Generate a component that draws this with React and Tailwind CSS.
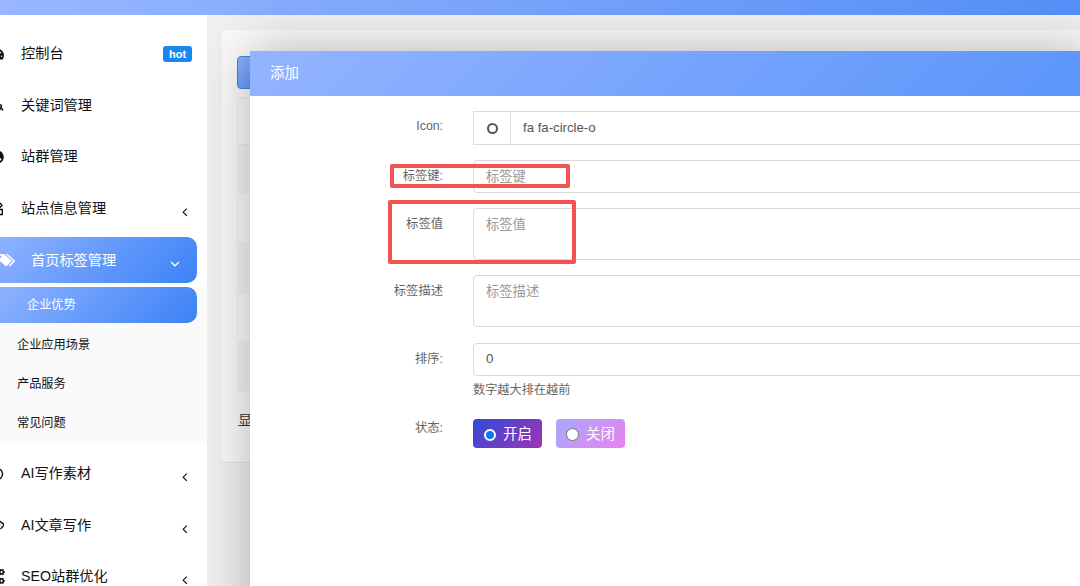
import { FaGlobeAsia, FaTachometerAlt, FaCogs } from "react-icons/fa";

const Chevron = ({ open }) => (
  <svg
    className="mt-[7px] h-[10px] w-[10px]"
    viewBox="0 0 10 10"
    fill="none"
    stroke="currentColor"
    strokeWidth="1.2"
  >
    <path d={open ? "M1 3 L5 6.8 L9 3" : "M6.8 1.6 L3.2 5.2 L6.8 8.8"} />
  </svg>
);

const LineIcon = ({ d }) => (
  <svg
    className="h-[14px] w-[14px]"
    viewBox="0 0 14 14"
    fill="none"
    stroke="currentColor"
    strokeWidth="1.4"
  >
    <path d={d} />
  </svg>
);

const TagsIcon = () => (
  <svg className="h-[14px] w-[16px]" viewBox="0 0 16 14" fill="currentColor">
    <path
      fillRule="evenodd"
      d="M-3 1 H4 L11 7.2 Q11.6 8 11 8.8 L6.8 13 Q6 13.6 5.2 13 L-3 5 Z M0.2 2.6 A1.2 1.2 0 1 0 0.3 2.6 Z"
    />
    <path d="M5.6 1 H7.4 L14.6 7.2 Q15.2 8 14.6 8.8 L10.4 13 Q9.4 13.6 8.6 12.8 L12.6 8.6 Q13 8 12.6 7.4 Z" />
  </svg>
);

const MenuItem = ({ icon, label, badge, arrow }) => (
  <a
    href="#"
    className="flex h-[51.6px] shrink-0 items-center pr-[15px] text-[14.2px] text-[#111]"
  >
    <span className="-ml-[10px] flex w-[31px] text-[14px]">{icon}</span>
    <span className="grow">{label}</span>
    {badge && (
      <span className="mt-[1px] flex h-4 w-[29px] items-center justify-center rounded-[3px] bg-[#1688f1] text-[11px] font-bold text-white">
        {badge}
      </span>
    )}
    {arrow && (
      <span className="mr-[2px]">
        <Chevron />
      </span>
    )}
  </a>
);

const SubItem = ({ label }) => (
  <a
    href="#"
    className="flex h-[39.2px] items-center pl-[17px] text-[12.2px] text-[#111]"
  >
    {label}
  </a>
);

const Sidebar = () => (
  <aside className="relative z-20 mr-[1px] flex w-[207px] shrink-0 flex-col overflow-hidden bg-white pt-[13px]">
    <MenuItem icon={<FaTachometerAlt />} label="控制台" badge="hot" />
    <MenuItem
      icon={<LineIcon d="M8 6 L11.5 7.5 L11 9.5 L13 12.5 M10.5 9 L9.5 12.5" />}
      label="关键词管理"
    />
    <MenuItem icon={<FaGlobeAsia />} label="站群管理" />
    <MenuItem
      icon={
        <LineIcon d="M7 1.5 H10.5 L12 3.5 L9.5 6 M9 7.5 H12.3 V12.5 H2 V3" />
      }
      label="站点信息管理"
      arrow
    />
    <a
      href="#"
      className="mt-[3px] flex h-[46px] w-[197px] shrink-0 items-center rounded-r-[10px] bg-linear-[135deg,#8fb2ff,#3b82f6] text-[14.2px] text-white"
    >
      <TagsIcon />
      <span className="ml-[15px] grow">首页标签管理</span>
      <span className="mr-[17px]">
        <Chevron open />
      </span>
    </a>
    <div className="mt-1 shrink-0 bg-[#fafafa] pb-[1px]">
      <a
        href="#"
        className="mb-[2px] flex h-[36px] w-[197px] items-center rounded-r-[10px] bg-linear-[135deg,#8fb2ff,#3b82f6] pl-[27px] text-[12.2px] text-white"
      >
        企业优势
      </a>
      <SubItem label="企业应用场景" />
      <SubItem label="产品服务" />
      <SubItem label="常见问题" />
    </div>
    <div className="mt-1 flex flex-col">
      <MenuItem
        icon={<LineIcon d="M7 1.5 A5.5 5.5 0 1 1 6.9 1.5" />}
        label="AI写作素材"
        arrow
      />
      <MenuItem
        icon={<LineIcon d="M2 4.5 H9.5 V3 L14 6.5 Q13 9 10.5 11 M9.5 6 V8" />}
        label="AI文章写作"
        arrow
      />
      <MenuItem
        icon={<FaCogs className="-ml-[4px] h-[15px] w-[19px] shrink-0" />}
        label="SEO站群优化"
        arrow
      />
    </div>
  </aside>
);

const Field = ({ label, className, children }) => (
  <div className={`flex ${className}`}>
    <label className="w-[193px] shrink-0 pt-[7px] text-right text-[12.3px] leading-[19px] text-[#666]">
      {label}
    </label>
    <div className="ml-[30px] grow">{children}</div>
  </div>
);

const AddDialog = () => (
  <section className="absolute top-[51px] left-[250px] z-10 h-[600px] w-[840px] bg-white shadow-[1px_1px_50px_rgba(0,0,0,0.3)]">
    <header className="flex h-[45px] items-center bg-linear-[135deg,#94b4ff,#5a95fa] pl-5 text-[14.4px] text-white">
      添加
    </header>
    <form className="text-[13.3px] text-[#555]">
      <Field
        label={<span className="-mt-[1px] block">Icon:</span>}
        className="mt-[15px]"
      >
        <div className="flex h-[34px] items-center border border-[#d8dadd]">
          <span className="flex h-full w-[37px] items-center justify-center border-r border-[#d8dadd]">
            <i className="h-[11px] w-[11px] rounded-full border-2 border-[#555]" />
          </span>
          <span className="pl-3 text-[13.2px]">fa fa-circle-o</span>
        </div>
      </Field>
      <Field label="标签键:" className="mt-[15px]">
        <div className="flex h-[33px] items-center rounded-[4px] border border-[#d8dadd] pl-3 text-[#999]">
          标签键
        </div>
      </Field>
      <Field label="标签值" className="mt-[15px]">
        <div className="h-[52px] rounded-[4px] border border-[#d8dadd] pt-[6px] pl-3 leading-5 text-[#999]">
          标签值
        </div>
      </Field>
      <Field label="标签描述" className="mt-[15px]">
        <div className="h-[52px] rounded-[4px] border border-[#d8dadd] pt-[6px] pl-3 leading-5 text-[#999]">
          标签描述
        </div>
      </Field>
      <Field label="排序:" className="mt-[16px]">
        <div className="flex h-[33px] items-center rounded-[4px] border border-[#d8dadd] pb-[1px] pl-3">
          0
        </div>
        <p className="mt-1 text-[12.2px] leading-5 text-[#666]">
          数字越大排在越前
        </p>
      </Field>
      <Field label="状态:" className="mt-[12px]">
        <div className="mt-[7px] flex gap-[14px] text-[14.4px] text-white">
          <span className="flex h-[29px] w-[69px] items-center rounded-[4px] bg-linear-[135deg,#2f4bd8,#9f33b4] pt-[2px] pl-[11px]">
            <i className="mr-[7px] h-3 w-3 rounded-full border-2 border-white bg-[#0878f8]" />
            开启
          </span>
          <span className="flex h-[29px] w-[69px] items-center rounded-[4px] bg-linear-[135deg,#a9a9fb,#e782ee] pt-[2px] pl-[10px]">
            <i className="mr-[7px] h-[13px] w-[13px] rounded-full border border-[#767676] bg-white" />
            关闭
          </span>
        </div>
      </Field>
    </form>
    {/* highlighted fields */}
    <div className="absolute top-[113px] left-[140px] h-6 w-[180px] rounded-[2px] border-4 border-[#f45353]" />
    <div className="absolute top-[149px] left-[138px] h-[64px] w-[188px] rounded-[2px] border-4 border-[#f45353]" />
  </section>
);

const App = () => (
  <div className="relative flex h-[586px] w-[1080px] flex-col overflow-hidden bg-[#f0f0f0] font-['Liberation_Sans','Noto_Sans_CJK_SC',sans-serif]">
    <div className="relative z-0 h-[15px] shrink-0 bg-linear-to-r from-[#98b7ff] to-[#5490f8]" />
    <div className="flex min-h-0 grow">
      <Sidebar />
      <main className="grow pt-[15px] pl-[14px]">
        <div className="h-[433px] rounded-[2px] border-b border-[#e4e4e4] bg-[#fafafa] pt-[26px] pl-[15px]">
          <div className="h-[33px] w-[60px] rounded-[4px] border border-[#4c83dc] bg-linear-[135deg,#8fb2ff,#3b82f6]" />
          <div className="mt-[9px] w-[300px] border-l border-[#f0f0f0]">
            <div className="h-[47px] border-t border-b border-[#ebebeb]" />
            <div className="h-[49px] border-b border-[#efefef] bg-[#f3f3f3]" />
            <div className="h-[50px] border-b border-[#efefef]" />
            <div className="h-[49px] border-b border-[#efefef] bg-[#f3f3f3]" />
            <div className="h-[49px] border-b border-[#efefef]" />
            <div className="h-[50px] border-b border-[#efefef] bg-[#f3f3f3]" />
          </div>
          <p className="mt-[18px] pl-[1px] text-[14px] leading-5 text-[#333]">
            显示第 1 到第 5 条记录
          </p>
        </div>
      </main>
    </div>
    <AddDialog />
  </div>
);

export default App;
